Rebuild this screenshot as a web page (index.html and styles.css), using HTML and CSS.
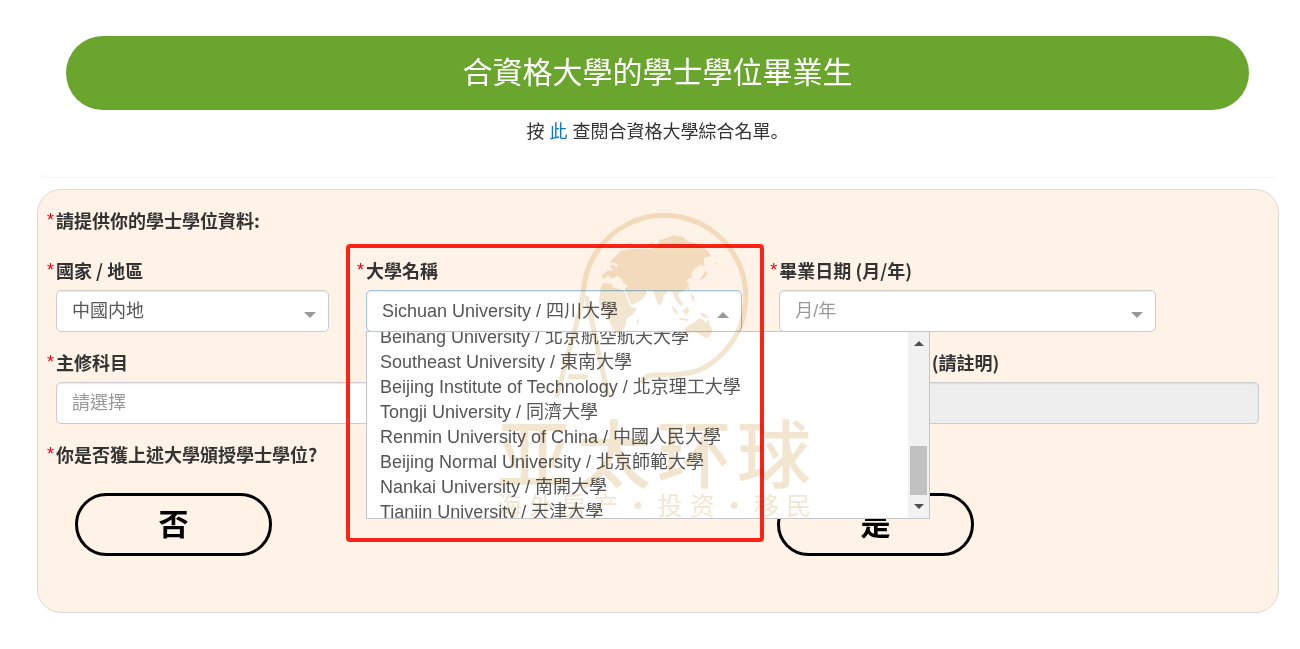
FILE: index.html
```html
<!DOCTYPE html>
<html lang="zh-Hant">
<head>
<meta charset="utf-8">
<title>合資格大學的學士學位畢業生</title>
<link rel="stylesheet" href="styles.css">
</head>
<body>
<main class="page">
  <header class="intro">
    <h1 class="banner">合資格大學的學士學位畢業生</h1>
    <p class="lead">按 <a href="#list">此</a> 查閱合資格大學綜合名單<span class="stop" lang="zh-Hans">。</span></p>
  </header>

  <form class="card">
    <p class="label heading"><span class="star">*</span>請提供你的學士學位資料:</p>

    <div class="row">
      <div class="col col-3">
        <label class="label" for="country"><span class="star">*</span>國家 / 地區</label>
        <div class="control">
          <select id="country" class="field"><option>中國内地</option></select>
          <span class="caret"></span>
        </div>
      </div>
      <div class="col col-4 active">
        <label class="label" for="university"><span class="star">*</span>大學名稱</label>
        <div class="control">
          <select id="university" class="field focused"><option>Sichuan University / 四川大學</option></select>
          <span class="caret up"></span>
          <div class="popup">
            <ul class="options">
              <li>Beihang University / 北京航空航天大學</li>
              <li>Southeast University / 東南大學</li>
              <li>Beijing Institute of Technology / 北京理工大學</li>
              <li>Tongji University / 同濟大學</li>
              <li>Renmin University of China / 中國人民大學</li>
              <li>Beijing Normal University / 北京師範大學</li>
              <li>Nankai University / 南開大學</li>
              <li>Tianjin University / 天津大學</li>
            </ul>
            <div class="scrollbar">
              <span class="arrow arrow-up"></span>
              <span class="track"></span>
              <span class="thumb"></span>
              <span class="arrow arrow-down"></span>
            </div>
          </div>
        </div>
        <div class="highlight"></div>
      </div>
      <div class="col col-4">
        <label class="label" for="graduation"><span class="star">*</span>畢業日期 (月/年)</label>
        <div class="control">
          <select id="graduation" class="field empty"><option>月/年</option></select>
          <span class="caret"></span>
        </div>
      </div>
    </div>

    <div class="row">
      <div class="col col-8">
        <label class="label" for="major"><span class="star">*</span>主修科目</label>
        <div class="control">
          <select id="major" class="field empty"><option>請選擇</option></select>
          <span class="caret"></span>
        </div>
      </div>
      <div class="col col-4">
        <label class="label" for="other"><span class="star"></span><span class="other">其他</span>(請註明)</label>
        <div class="control">
          <input id="other" class="field" type="text" disabled>
        </div>
      </div>
    </div>

    <p class="label question"><span class="star">*</span>你是否獲上述大學頒授學士學位?</p>
    <div class="answers">
      <button class="answer" type="button">否</button>
      <button class="answer" type="button">是</button>
    </div>

    <div class="watermark" aria-hidden="true">
      <svg class="globe" viewBox="-20 30 600 570" width="200" height="190">
        <g fill="none" stroke="currentColor" stroke-width="15" stroke-linecap="round" stroke-linejoin="round">
          <path d="M-2 582 L68 325 Q72 300 77 272 A244 244 0 1 1 430 505 Q400 518 350 521 L282 522 Q262 526 253 540"/>
          <path d="M88 292 L150 582 M38 527 H84"/>
        </g>
        <g fill="currentColor">
          <path d="M156 184 L172 168 L188 151 L210 145 L246 144 L284 143 L302 134 L304 117 L330 110 L348 103 L376 108 L388 120 L410 125 L436 138 L450 150 L460 165 L438 171 L441 198 L430 190 L412 202 L400 218 L404 228 L386 238 L395 252 L386 266 L364 275 L362 288 L376 308 L370 316 L354 296 L346 276 L334 270 L318 282 L314 304 L304 314 L294 294 L288 272 L264 268 L268 280 L250 298 L222 312 L208 282 L201 262 L212 256 L198 246 L190 232 L178 224 L164 234 L152 224 L138 234 L130 224 L148 210 L166 208 L158 198 L164 190 L176 200 L182 190 L170 186 Z"/>
          <path d="M134 247 L162 248 L166 260 L188 264 L200 270 L210 298 L222 319 L238 322 L226 340 L206 354 L204 372 L190 398 L182 402 L162 378 L148 346 L132 326 L124 300 L128 268 Z"/>
          <path d="M380 385 L394 372 L412 364 L424 352 L438 356 L444 366 L452 354 L458 374 L465 388 L456 408 L444 412 L426 400 L408 392 L386 400 Z"/>
          <path d="M340 312 L354 324 L364 344 L352 336 Z M374 328 L390 318 L396 330 L384 344 Z M364 350 L392 354 L390 359 L366 356 Z M424 334 L440 338 L456 350 L438 350 Z M398 274 L408 284 L412 302 L402 294 Z M444 208 L450 218 L438 232 L424 238 L436 222 Z M390 258 L396 262 L393 271 Z M240 350 L244 362 L236 376 Z M208 128 L226 122 L214 134 Z M272 130 L284 122 L287 132 Z M472 184 L480 188 L474 192 Z"/>
        </g>
      </svg>
      <div class="brand"><span>亚</span><span>太</span><span>环</span><span>球</span></div>
      <div class="tagline"><span>海</span><span>外</span><span>房</span><span>产</span><span class="dot">·</span><span>投</span><span>资</span><span class="dot">·</span><span>移</span><span>民</span></div>
    </div>
  </form>
</main>
</body>
</html>
```
FILE: styles.css
```css
* { box-sizing: border-box; }

body {
  margin: 0;
  background: #fff;
  color: #333;
  font: 18px/25px "Liberation Sans", "Noto Sans CJK TC", sans-serif;
}

.page { padding: 0 21px 36px 37px; }

.intro {
  padding: 36px 30px 32px 29px;
  border-bottom: 1px solid #f4f4f4;
  border-radius: 0 0 10px 10px;
  text-align: center;
}

.banner {
  margin: 0 0 10px;
  padding: 14px;
  border-radius: 37px;
  background: #6aa52d;
  color: #fff;
  font-size: 30px;
  font-weight: 400;
  line-height: 46px;
}

.lead { margin: 0; }
.lead a { color: #1277d1; text-decoration: none; }
.stop { font-family: "Noto Sans CJK SC", sans-serif; line-height: 18px; }

.card {
  position: relative;
  margin-top: 11px;
  padding: 18px 0 56px;
  border: 1px solid #dcd9d6;
  border-radius: 24px;
  background: #fff2e6;
}

.label {
  display: flex;
  margin: 0 0 7px;
  font-family: "Noto Sans CJK TC", sans-serif;
  font-weight: 700;
  line-height: 25px;
  white-space: pre;
}

.star {
  width: 9px;
  color: #e60012;
  font-family: "Liberation Sans", sans-serif;
  font-weight: 400;
}

.heading { margin: 0 9px 25px; }

.row { display: flex; margin-bottom: 18px; }
.col { padding: 0 19px 0 9px; }
.col-3 { width: 25%; }
.col-4 { width: 33.3333%; }
.col-8 { width: 66.6667%; }

.control { position: relative; margin-left: 9px; }

.field {
  display: block;
  width: 100%;
  height: 42px;
  padding: 0 32px 0 15px;
  appearance: none;
  border: 1px solid #ccc;
  border-radius: 5px;
  background: #fff;
  box-shadow: inset 0 1px 1px rgba(0, 0, 0, .08);
  color: #555;
  font: inherit;
  opacity: 1;
}
.field.empty { color: #999; }
.field.focused { border-color: #9fc3da; }
.field:disabled { background: #eee; }

.caret {
  position: absolute;
  right: 13px;
  top: 22px;
  border: 6px solid transparent;
  border-top-color: #999;
  border-bottom-width: 0;
}
.caret.up {
  border-top-width: 0;
  border-bottom: 6px solid #999;
}

.active { position: relative; z-index: 2; }

.highlight {
  position: absolute;
  z-index: 4;
  top: -14px;
  left: -2px;
  right: -3px;
  height: 298px;
  border: 4px solid #ff2316;
  border-radius: 4px;
  pointer-events: none;
}

.popup {
  position: absolute;
  top: 41px;
  left: 0;
  display: flex;
  width: 150%;
  height: 188px;
  border: 1px solid #c4c4c4;
  background: #fff;
}

.options {
  display: flex;
  flex: 1;
  flex-direction: column;
  justify-content: center;
  overflow: hidden;
  margin: 0;
  padding: 0 13px;
  color: #555;
  list-style: none;
}
.options li { flex: none; white-space: nowrap; }

.scrollbar {
  display: flex;
  flex-direction: column;
  align-items: center;
  width: 21px;
  padding: 9px 2px;
  background: #f1f1f1;
}
.track { flex: 1; }
.thumb { width: 17px; height: 49px; margin-bottom: 9px; background: #c1c1c1; }
.arrow { border: 5px solid transparent; }
.arrow-up { border-top-width: 0; border-bottom-color: #505050; }
.arrow-down { border-bottom-width: 0; border-top-color: #505050; }

.other { margin-right: 13px; }

.question { margin: 0 9px 26px; }

.answers {
  display: grid;
  grid-template-columns: 702fr 501fr;
  padding-left: 37px;
}

.answer {
  width: 197px;
  height: 63px;
  padding: 0 0 6px;
  border: 3px solid #000;
  border-radius: 32px;
  background: transparent;
  color: #000;
  font: 700 30px/40px "Noto Sans CJK TC", sans-serif;
}

.watermark {
  position: absolute;
  z-index: 3;
  top: 21px;
  left: 459px;
  width: 314px;
  color: #f2e6d0;
  font-family: "Noto Sans CJK SC", sans-serif;
  mix-blend-mode: multiply;
  pointer-events: none;
}
.globe { display: block; margin-left: 54px; }
.brand {
  display: flex;
  justify-content: space-between;
  margin-top: 7px;
  font-size: 74px;
  font-weight: 500;
  line-height: 84px;
}
.tagline {
  display: flex;
  justify-content: space-between;
  font-size: 25px;
  line-height: 24px;
}
.dot { font-weight: 900; }
```
